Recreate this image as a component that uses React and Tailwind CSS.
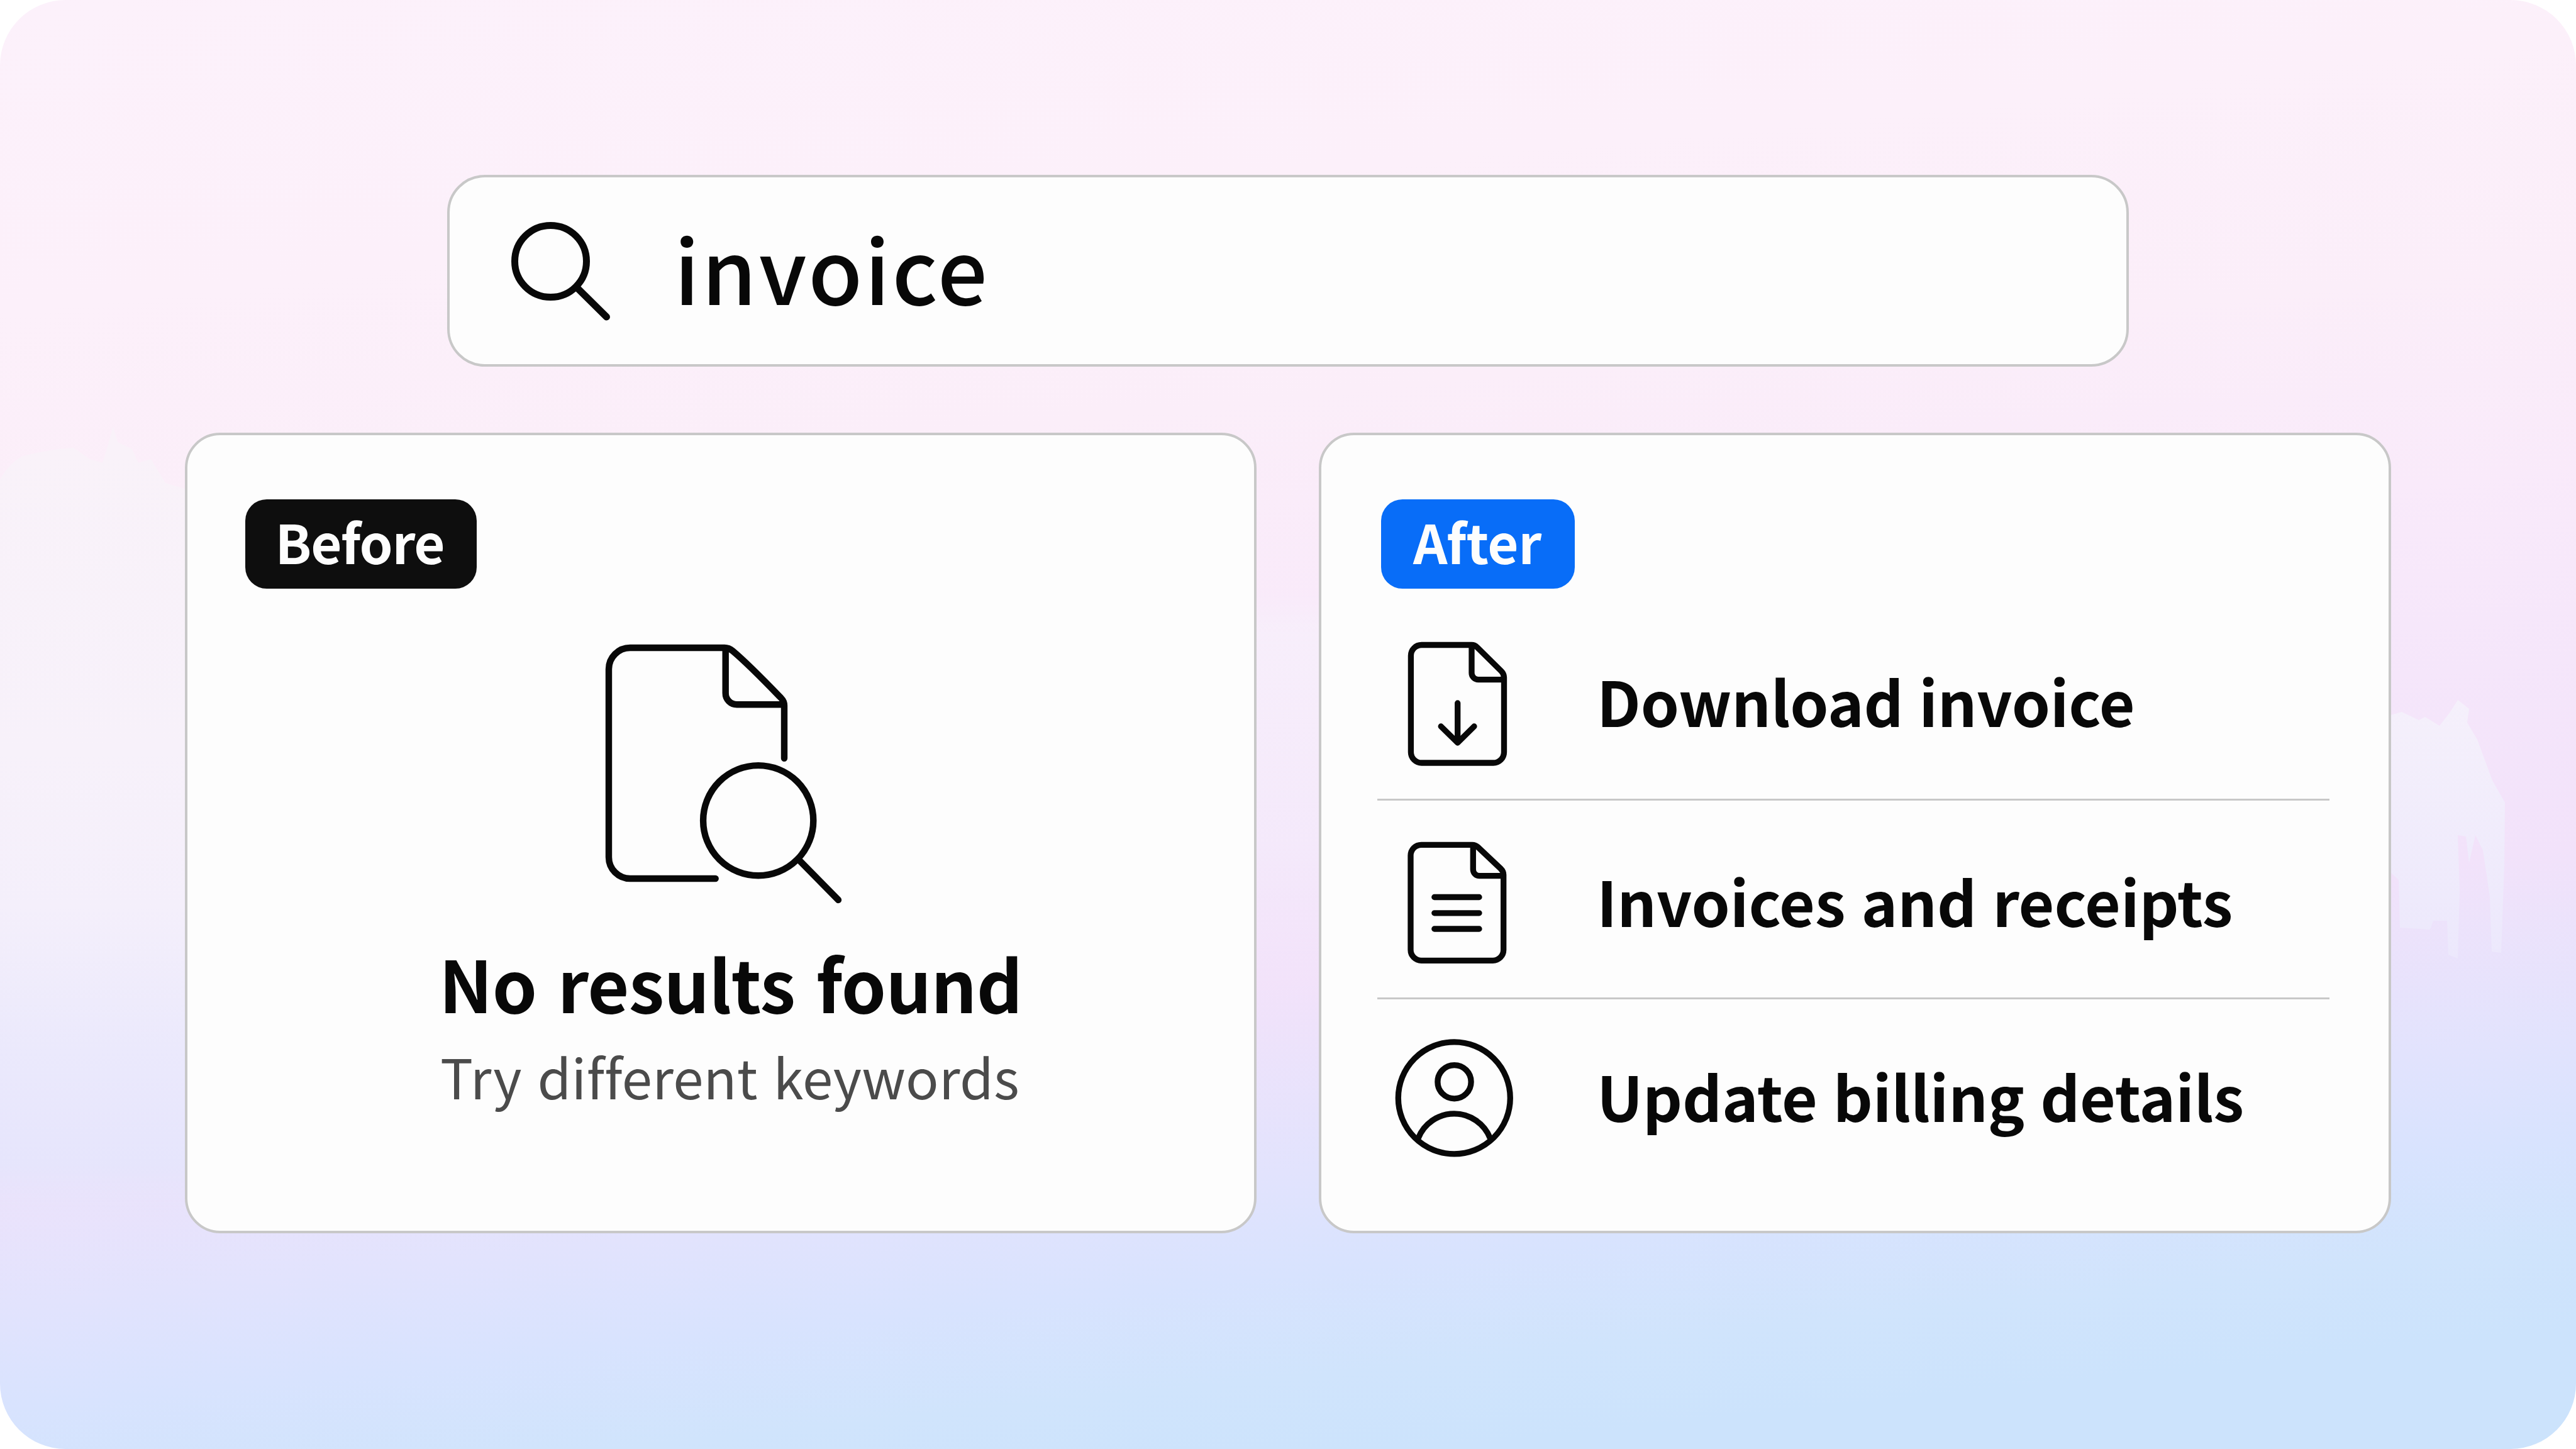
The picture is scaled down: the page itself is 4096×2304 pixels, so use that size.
import React from 'react';

const SearchIcon = () => (
  <svg viewBox="0 0 180 180" className="w-[180px] h-[180px]" fill="none" stroke="#080808" strokeWidth="11" strokeLinecap="round">
    <circle cx="75.5" cy="75.5" r="57" />
    <path d="M117 117 L164.5 164" />
  </svg>
);

const NoResultsIcon = () => (
  <svg
    viewBox="0 0 400 420"
    className="w-[400px] h-[420px] mt-[84px] ml-[570px]"
    fill="none"
    stroke="#080808"
    strokeWidth="10.4"
    strokeLinecap="round"
    strokeLinejoin="round"
  >
    <path d="M177.7 377 H42 A34 34 0 0 1 8 343 V44 A34 34 0 0 1 42 10 H192 Q199 10 205 15 C230 36 254 61 282 90 Q287 95 287 102 V185.7" />
    <path d="M193.7 12 V82 A18 18 0 0 0 212 100.3 H286" />
    <circle cx="245.7" cy="284.7" r="87.6" />
    <path d="M311 348 L373 411" />
  </svg>
);

const RowIcon = ({ children }) => (
  <svg
    viewBox="0 0 200 200"
    className="w-[200px] h-[200px] shrink-0"
    fill="none"
    stroke="#080808"
    strokeWidth="9.3"
    strokeLinecap="round"
    strokeLinejoin="round"
  >
    {children}
  </svg>
);

const DownloadIcon = () => (
  <RowIcon>
    <path d="M48.4 5.5 H128 Q133 5.5 137 9.5 L175 47 Q179.5 51.5 179.5 57 V176 A17 17 0 0 1 162.5 193 H48.4 A17 17 0 0 1 31.4 176 V22.5 A17 17 0 0 1 48.4 5.5 Z" />
    <path d="M128 7 V50 A10.6 10.6 0 0 0 138.6 60.6 H178" />
    <path d="M105.7 98 V161 M79.2 135 L105.7 161 L132 135" />
  </RowIcon>
);

const ReceiptIcon = () => (
  <RowIcon>
    <path d="M49 8.3 H129 Q134 8.3 138 12 L174 46 Q178.7 50.5 178.7 56 V175.3 A17 17 0 0 1 161.7 192.3 H48 A17 17 0 0 1 31 175.3 V25.3 A17 17 0 0 1 48 8.3 Z" />
    <path d="M130.3 10 V47.5 A10.2 10.2 0 0 0 140.5 57.7 H177" />
    <path d="M68.8 91.5 H140 M68.8 116.8 H140 M68.8 142 H140" />
  </RowIcon>
);

const AccountIcon = () => (
  <RowIcon>
    <circle cx="100.3" cy="99.9" r="89" />
    <circle cx="100.5" cy="74.2" r="26.6" />
    <path d="M43 164 A61.5 61.5 0 0 1 157.5 164" />
  </RowIcon>
);

const results = [
  { label: 'Download invoice', icon: DownloadIcon, row: 'h-[337px] pt-[84px] border-b-[3px]', text: 'mt-[43px] tracking-[-0.3px]' },
  { label: 'Invoices and receipts', icon: ReceiptIcon, row: 'h-[316px] pt-[62px] border-b-[3px]', text: 'mt-[46px] tracking-[-0.1px]' },
  { label: 'Update billing details', icon: AccountIcon, row: 'pt-[57px]', text: 'mt-[45px] tracking-[-0.2px]' },
];

// Faint shapes of the backdrop, behind the cards
const Backdrop = () => (
  <svg viewBox="0 0 4096 2304" className="absolute inset-0 w-full h-full">
    <defs>
      <linearGradient id="haze" x1="0" y1="700" x2="0" y2="1940" gradientUnits="userSpaceOnUse">
        <stop offset="0" stopColor="#f9f2f9" />
        <stop offset="0.4" stopColor="#f7f1fa" />
        <stop offset="0.6" stopColor="#f4effb" />
        <stop offset="0.78" stopColor="#ebe9fc" />
        <stop offset="0.93" stopColor="#e6e5fc" />
        <stop offset="1" stopColor="#e6e3fc" stopOpacity="0" />
      </linearGradient>
      <linearGradient id="gap" x1="0" y1="940" x2="0" y2="1600" gradientUnits="userSpaceOnUse">
        <stop offset="0" stopColor="#f7f0fb" stopOpacity="0" />
        <stop offset="0.1" stopColor="#f7f0fb" stopOpacity="0.7" />
        <stop offset="0.6" stopColor="#f4ebfb" stopOpacity="0.7" />
        <stop offset="1" stopColor="#f3e6fa" stopOpacity="0" />
      </linearGradient>
      <linearGradient id="shape" x1="0" y1="1113" x2="0" y2="1524" gradientUnits="userSpaceOnUse">
        <stop offset="0" stopColor="#f5f0fb" />
        <stop offset="1" stopColor="#ece8fc" />
      </linearGradient>
    </defs>
    <path
      fill="url(#haze)"
      d="M0 763 Q15 735 37 725 Q80 714 117 712 L143 730 L163 736 L174 700 L180 678 L187 703 L210 714 L220 736 L240 730 L263 768 L300 779 V1940 H0 Z"
    />
    <rect x="1990" y="940" width="120" height="660" fill="url(#gap)" />
    <path
      fill="url(#shape)"
      d="M3790 1140 L3819 1132 L3846 1145 L3856 1140 L3879 1154 L3896 1132 L3908 1113 L3926 1127 L3923 1149 L3939 1176 L3963 1241 L3983 1276 L3982 1377 L3977 1515 L3962 1513 L3959 1426 L3948 1352 L3936 1328 L3926 1372 L3921 1330 L3908 1328 L3911 1415 L3908 1524 L3893 1518 L3891 1464 L3869 1464 L3864 1478 L3816 1475 L3814 1399 L3790 1377 Z"
    />
  </svg>
);

const Badge = ({ className, children }) => (
  <div className={`h-[142px] pt-[16px] rounded-[34px] flex items-start justify-center text-[85px] leading-[100px] font-bold text-[#fdfdfd] ${className}`}>
    {children}
  </div>
);

export default function App() {
  return (
    <div className="relative w-[4096px] h-[2304px] overflow-hidden bg-white text-[#080808] font-['Noto_Sans_CJK_SC',sans-serif]">
      <div className="relative w-full h-full rounded-[104px] overflow-hidden bg-[linear-gradient(174deg,#fcf1fb_0%,#fcf0fa_18%,#fbeef9_31%,#f9eafa_43%,#f5e6fa_54%,#f2e2fa_65%,#e2e3fd_76%,#d8e3fe_82%,#d0e4fc_88%,#cce3fc_93%,#cce3fc_100%)]">
        <Backdrop />

        <div className="relative flex flex-col h-full pt-[278px]">
          {/* Search bar */}
          <div className="mx-[711px] h-[305px] bg-[#fdfdfd] border-4 border-[#c8c8c8] rounded-[60px] flex items-start pl-[85px] pt-[58px]">
            <SearchIcon />
            <span className="ml-[92px] mt-[13px] text-[140px] leading-[142px] font-medium tracking-[3.4px]">invoice</span>
          </div>

          {/* Result panels */}
          <div className="mt-[105px] ml-[294px] grid grid-cols-[1704px_1705px] gap-[99px]">
            <div className="h-[1273px] bg-[#fdfdfd] border-4 border-[#c8c8c8] rounded-[56px] pt-[102px] pl-[92px]">
              <Badge className="w-[368px] pr-[4px] bg-[#0e0e0e] tracking-[-1.2px]">Before</Badge>
              <NoResultsIcon />
              <h2 className="mt-[62px] ml-[308px] text-[114px] leading-[120px] font-bold tracking-[-0.7px] [word-spacing:8px]">No results found</h2>
              <p className="mt-[38px] ml-[310px] text-[87px] leading-[100px] tracking-[0.2px] [word-spacing:5px] text-[#4b4b4b]">Try different keywords</p>
            </div>

            <div className="h-[1273px] bg-[#fdfdfd] border-4 border-[#c8c8c8] rounded-[56px] pt-[102px] pl-[89px] pr-[94px]">
              <Badge className="w-[308px] ml-[6px] pr-[2px] bg-[#086df8] tracking-[-0.3px]">After</Badge>
              <ul>
                {results.map(({ label, icon: Icon, row, text }) => (
                  <li key={label} className={`flex items-start pl-[22px] border-[#c8c8c8] ${row}`}>
                    <Icon />
                    <span className={`ml-[127px] text-[98px] leading-[100px] font-bold [word-spacing:3px] ${text}`}>{label}</span>
                  </li>
                ))}
              </ul>
            </div>
          </div>
        </div>
      </div>
    </div>
  );
}
